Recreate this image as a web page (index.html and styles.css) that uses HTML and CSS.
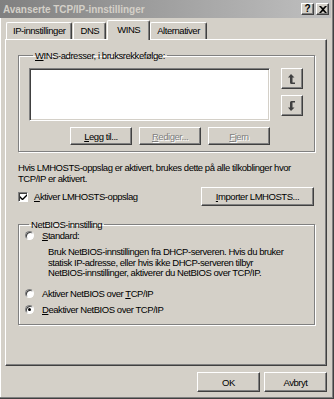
FILE: index.html
```html
<!DOCTYPE html>
<html lang="no">
<head>
  <meta charset="UTF-8">
  <meta name="viewport" content="width=device-width, initial-scale=1.0">
  <title>Avanserte TCP/IP-innstillinger</title>

  <link rel="stylesheet" href="styles.css">

</head>
<body>
  <div class="dialog">
    <div class="titlebar">
      <span class="title">Avanserte TCP/IP-innstillinger</span>
      <div class="caption-buttons">
        <button class="cap-btn help">?</button>
        <button class="cap-btn close">
          <svg width="8" height="7" viewBox="0 0 8 7"><path d="M0 0h2l2 2 2-2h2L5 3.5 8 7H6L4 5 2 7H0l3-3.5z" fill="#000"/></svg>
        </button>
      </div>
    </div>

    <div class="tabs">
      <div class="tab">IP-innstillinger</div>
      <div class="tab">DNS</div>
      <div class="tab active">WINS</div>
      <div class="tab">Alternativer</div>
    </div>

    <div class="panel">
      <fieldset class="group wins-group">
        <legend><u>W</u>INS-adresser, i bruksrekkefølge:</legend>
        <div class="list-row">
          <div class="listbox"></div>
          <div class="arrows">
            <button class="btn arrow-btn">
              <svg width="8" height="10" viewBox="0 0 8 10"><path d="M3 0 0 3.5h2v5Q2 10 3.5 10H7V8.5H4.5v-5h2z" fill="#404040"/></svg>
            </button>
            <button class="btn arrow-btn">
              <svg width="8" height="10" viewBox="0 0 8 10"><path d="M3 10 0 6.5h2v-5Q2 0 3.5 0H7v1.5H4.5v5h2z" fill="#404040"/></svg>
            </button>
          </div>
        </div>
        <div class="btn-row">
          <button class="btn"><u>L</u>egg til...</button>
          <button class="btn" disabled><u>R</u>ediger...</button>
          <button class="btn" disabled><u>F</u>jern</button>
        </div>
      </fieldset>

      <p class="note">Hvis LMHOSTS-oppslag er aktivert, brukes dette på alle tilkoblinger hvor<br>TCP/IP er aktivert.</p>

      <div class="lm-row">
        <label class="check-label">
          <span class="checkbox">
            <svg width="7" height="7" viewBox="0 0 7 7"><path d="M0 3l2.5 2.5L7 1V3L2.5 7.5 0 5z" fill="#000"/></svg>
          </span>
          <span><u>A</u>ktiver LMHOSTS-oppslag</span>
        </label>
        <button class="btn import-btn"><u>I</u>mporter LMHOSTS...</button>
      </div>

      <fieldset class="group netbios-group">
        <legend>NetBIOS-innstilling</legend>
        <label class="radio-label first">
          <span class="radio"></span>
          <span><u>S</u>tandard:</span>
        </label>
        <p class="radio-desc">Bruk NetBIOS-innstillingen fra DHCP-serveren. Hvis du bruker<br>statisk IP-adresse, eller hvis ikke DHCP-serveren tilbyr<br>NetBIOS-innstillinger, aktiverer du NetBIOS over TCP/IP.</p>
        <label class="radio-label spaced">
          <span class="radio"></span>
          <span>Aktiver NetBIOS over <u>T</u>CP/IP</span>
        </label>
        <label class="radio-label">
          <span class="radio checked"></span>
          <span><u>D</u>eaktiver NetBIOS over TCP/IP</span>
        </label>
      </fieldset>
    </div>

    <div class="footer">
      <button class="btn footer-btn">OK</button>
      <button class="btn footer-btn">Avbryt</button>
    </div>
  </div>
</body>
</html>
```

FILE: styles.css
```css
body {
    margin: 0;
    background-color: #d4d0c8;
    font-family: "Liberation Sans", Arial, sans-serif;
    font-size: 9.5px;
    letter-spacing: -0.45px;
    line-height: 11px;
    color: #000;
}

.dialog {
    width: 334px;
    height: 399px;
    box-sizing: border-box;
    border-right: 1px solid #404040;
    border-bottom: 1px solid #404040;
    box-shadow: inset -1px -1px #808080, inset 1px 0 #fff;
    overflow: hidden;
}

u {
    text-decoration: underline;
    text-underline-offset: 1px;
}

/* title bar */
.titlebar {
    height: 18px;
    margin-right: 2px;
    display: flex;
    align-items: center;
    justify-content: space-between;
    padding: 0 2px 0 3px;
    background: linear-gradient(to right, #808080, #c0c0c0);
}

.title {
    color: #d4d0c8;
    font-weight: bold;
    font-size: 10px;
    letter-spacing: -0.05px;
}

.caption-buttons {
    display: flex;
    gap: 2px;
}

.cap-btn {
    width: 13px;
    height: 12px;
    padding: 0;
    display: flex;
    align-items: center;
    justify-content: center;
    background: #d4d0c8;
    border: 1px solid;
    border-color: #fff #404040 #404040 #fff;
    box-shadow: inset -1px -1px #808080;
    font-family: "Liberation Sans", sans-serif;
    font-weight: bold;
    font-size: 10px;
    line-height: 10px;
    color: #000;
}

/* tabs */
.tabs {
    display: flex;
    align-items: flex-end;
    height: 19px;
    margin: 2px 0 0 6px;
}

.tab {
    position: relative;
    height: 16px;
    line-height: 16px;
    padding: 0 6px;
    border: 1px solid;
    border-color: #fff #404040 transparent #fff;
    border-bottom: none;
    border-radius: 2px 2px 0 0;
    box-shadow: inset -1px 0 #808080;
    background: #d4d0c8;
}

.tab + .tab {
    margin-left: 1px;
}

.tab.active {
    z-index: 1;
    height: 19px;
    margin: 0 -1px -1px 1px;
    padding: 0 9px;
    line-height: 17px;
}

/* main panel */
.panel {
    width: 322px;
    height: 327px;
    box-sizing: border-box;
    margin-left: 5px;
    padding: 10px 11px 0 12px;
    border: 1px solid;
    border-color: #fff #404040 #404040 #fff;
    box-shadow: inset -1px -1px #808080;
}

.group {
    margin: 0;
    padding: 0 9px 6px 10px;
    border: 1px solid #808080;
    box-shadow: 1px 1px #fff, inset 1px 1px #fff;
}

.group legend {
    padding: 0 2px;
    margin-left: 4px;
    line-height: 11px;
}

.list-row {
    display: flex;
    gap: 11px;
    margin-top: 7px;
}

.listbox {
    width: 241px;
    height: 53px;
    box-sizing: border-box;
    background: #fff;
    border: 1px solid;
    border-color: #808080 #fff #fff #808080;
    box-shadow: inset 1px 1px #404040, inset -1px -1px #d4d0c8;
}

.arrows {
    display: flex;
    flex-direction: column;
    gap: 6px;
}

.btn {
    font: inherit;
    letter-spacing: inherit;
    line-height: 11px;
    padding: 0;
    color: #000;
    background: #d4d0c8;
    border: 1px solid;
    border-color: #fff #404040 #404040 #fff;
    box-shadow: inset -1px -1px #808080;
}

.btn:disabled {
    color: #808080;
    text-shadow: 1px 1px #fff;
}

.arrow-btn {
    width: 22px;
    height: 21px;
    display: flex;
    align-items: center;
    justify-content: center;
}

.btn-row {
    width: 241px;
    display: flex;
    justify-content: flex-end;
    gap: 7px;
    margin-top: 6px;
}

.btn-row .btn {
    width: 62px;
    height: 18px;
}

.note {
    margin: 10px 0 0;
}

.lm-row {
    display: flex;
    align-items: center;
    justify-content: space-between;
    margin: 3px 1px 0 0;
}

.check-label {
    display: flex;
    align-items: center;
    gap: 6px;
}

.checkbox {
    width: 10px;
    height: 10px;
    box-sizing: border-box;
    display: flex;
    align-items: center;
    justify-content: center;
    background: #fff;
    border: 1px solid;
    border-color: #808080 #fff #fff #808080;
    box-shadow: inset 1px 1px #404040;
}

.import-btn {
    width: 113px;
    height: 19px;
}

.netbios-group {
    margin-top: 13px;
    padding: 0 9px 9px 6px;
}

.radio-label {
    display: flex;
    align-items: center;
    gap: 8px;
    height: 11px;
}

.radio-label.spaced {
    margin-top: 9px;
    margin-bottom: 5px;
}

.radio {
    width: 9px;
    height: 9px;
    box-sizing: border-box;
    border-radius: 50%;
    background: #fff;
    border: 1px solid;
    border-color: #808080 #fff #fff #808080;
    box-shadow: inset 1px 1px #404040;
    display: flex;
    align-items: center;
    justify-content: center;
}

.radio.checked::after {
    content: "";
    width: 3px;
    height: 3px;
    border-radius: 50%;
    background: #000;
}

.radio-desc {
    margin: 6px 0 0 23px;
    line-height: 10.5px;
}

/* footer buttons */
.footer {
    display: flex;
    justify-content: flex-end;
    gap: 4px;
    margin: 6px 6px 0 0;
}

.footer-btn {
    width: 63px;
    height: 20px;
}
```
